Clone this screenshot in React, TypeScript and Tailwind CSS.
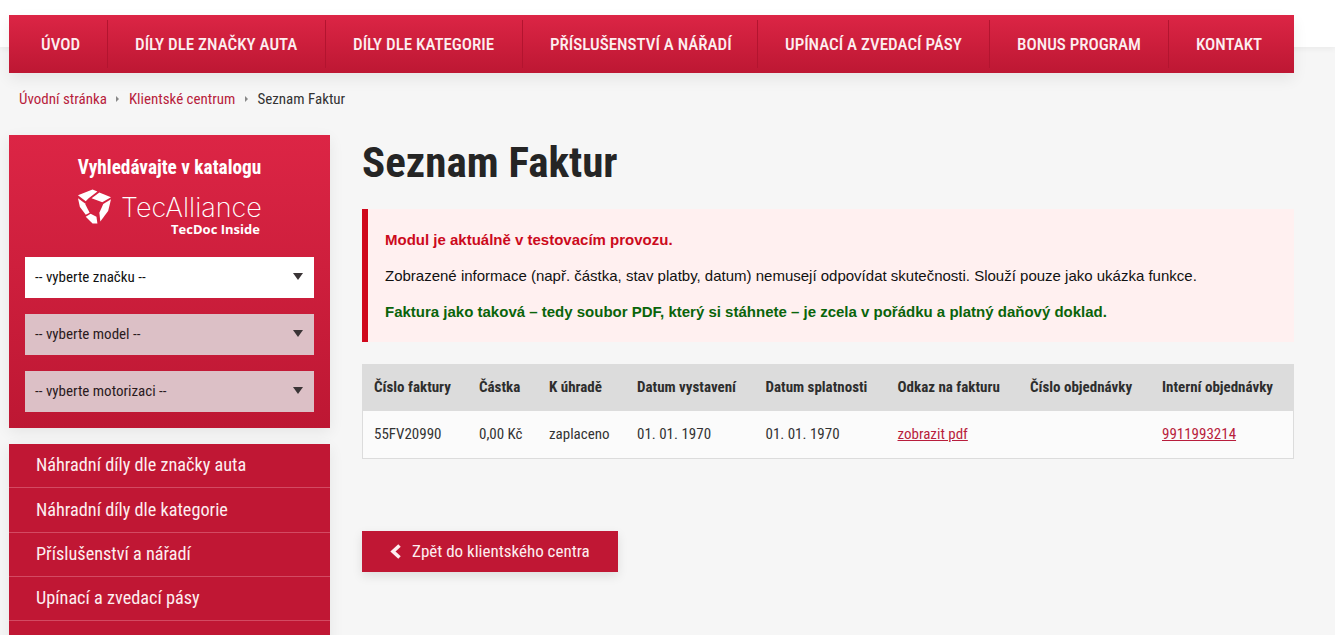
const NAV_ITEMS = [
  { label: 'Úvod', cls: 'w-[98px] pl-8' },
  { label: 'Díly dle značky auta', cls: 'w-[218px] pl-[27px]' },
  { label: 'Díly dle kategorie', cls: 'w-[197px] pl-[27px]' },
  { label: 'Příslušenství a nářadí', cls: 'w-[235px] pl-[27px]' },
  { label: 'Upínací a zvedací pásy', cls: 'w-[232px] pl-[27px]' },
  { label: 'Bonus program', cls: 'w-[179px] pl-[27px]' },
  { label: 'Kontakt', cls: 'w-[126px] pl-[27px]' },
];

const SIDE_ITEMS = [
  'Náhradní díly dle značky auta',
  'Náhradní díly dle kategorie',
  'Příslušenství a nářadí',
  'Upínací a zvedací pásy',
  'Ruční nářadí',
];

const HEADERS = [
  'Číslo faktury',
  'Částka',
  'K úhradě',
  'Datum vystavení',
  'Datum splatnosti',
  'Odkaz na fakturu',
  'Číslo objednávky',
  'Interní objednávky',
];

const condensed = "font-['Roboto_Condensed','Roboto',sans-serif] [font-stretch:75%]";

function Select({ label, disabled }: { label: string; disabled?: boolean }) {
  return (
    <div
      className={`flex h-[41px] items-center justify-between pl-2.5 pr-[11px] text-[15px] ${
        disabled ? 'bg-[#dcc0c6] text-[#2a1a1d]' : 'bg-white text-[#111]'
      }`}
    >
      <span>{label}</span>
      <span className="mb-0.5 h-0 w-0 border-x-[5px] border-t-[7px] border-x-transparent border-t-[#3a3436]" />
    </div>
  );
}

function TecAllianceLogo() {
  return (
    <div className="mt-[9px] flex justify-center">
      <div className="flex items-start gap-[9px]">
        <svg viewBox="0 0 36 37" className="h-[37px] w-[35px] shrink-0" fill="#fff">
          <path d="M1 6 L16 0 L21 2 L12 9 L9 12 Z" />
          <path d="M23 3 L35 8 L26 13 L15 9 Z" />
          <path d="M35 10 L32 22 L24 33 L23 24 L27 15 Z" />
          <path d="M1 9 L8 14 L13 24 L9 26 L3 18 Z" />
          <path d="M9 28 L14 25 L20 28 L21 35 L16 35 Z" />
        </svg>
        <div className="flex flex-col items-end pt-[5px] [font-stretch:100%]">
          <span className="font-['Inter',sans-serif] text-[27px] font-extralight leading-[28px] text-white">
            TecAlliance
          </span>
          <span className="pr-0.5 font-['Open_Sans',sans-serif] text-[13px] font-bold leading-[14px] text-white">
            TecDoc Inside
          </span>
        </div>
      </div>
    </div>
  );
}

export default function App() {
  return (
    <div className={`relative h-[635px] overflow-hidden bg-[#f6f6f6] ${condensed}`}>
      {/* White header strip behind the nav */}
      <div className="absolute inset-x-0 top-0 h-[47px] bg-white shadow-[0_2px_6px_rgba(0,0,0,0.05)]" />

      <div className="relative w-[1294px] pl-[9px] pt-[15px]">
        {/* Main nav */}
        <nav className="flex h-[58px] items-center bg-gradient-to-b from-[#dc2545] to-[#bd1733] shadow-[0_6px_14px_rgba(0,0,0,0.07)]">
          {NAV_ITEMS.map((item, i) => (
            <a
              key={item.label}
              className={`flex h-[48px] items-center whitespace-nowrap pt-0.5 text-[17px] font-medium uppercase text-[#fdeef0] ${item.cls} ${
                i > 0 ? 'border-l border-[#b3142f]' : ''
              }`}
            >
              {item.label}
            </a>
          ))}
        </nav>

        {/* Breadcrumb */}
        <div className="flex h-[52px] items-center pl-2.5 text-[15px] text-[#333]">
          <a className="text-[#b81d3c]">Úvodní stránka</a>
          <span className="mx-[9.5px] h-0 w-0 border-y-[3px] border-l-[3px] border-y-transparent border-l-[#888]" />
          <a className="text-[#b81d3c]">Klientské centrum</a>
          <span className="mx-[9.5px] h-0 w-0 border-y-[3px] border-l-[3px] border-y-transparent border-l-[#888]" />
          <span>Seznam Faktur</span>
        </div>

        <div className="mt-2.5 flex gap-8">
          {/* Sidebar */}
          <aside className="w-[321px] shrink-0">
            <div className="h-[293px] bg-gradient-to-b from-[#dc2545] to-[#bd1733] px-4 pt-[21px] shadow-[0_4px_14px_rgba(0,0,0,0.07)]">
              <h3 className="text-center text-[19.3px] font-bold leading-6 text-white">Vyhledávajte v katalogu</h3>
              <TecAllianceLogo />
              <div className="mt-[21px] flex flex-col gap-4">
                <Select label="-- vyberte značku --" />
                <Select label="-- vyberte model --" disabled />
                <Select label="-- vyberte motorizaci --" disabled />
              </div>
            </div>

            <ul className="mt-4 bg-[#c01734] shadow-[0_4px_14px_rgba(0,0,0,0.07)]">
              {SIDE_ITEMS.map((label) => (
                <li
                  key={label}
                  className="flex h-[44.33px] items-center border-b border-[#d34a62] pb-px pl-[27px] text-[18.25px] text-[#fdeef0]"
                >
                  {label}
                </li>
              ))}
            </ul>
          </aside>

          {/* Content */}
          <main className="w-[932px]">
            <h1 className="text-[43px] font-bold leading-[54px] text-[#252525]">Seznam Faktur</h1>

            <div className="mt-5 border-l-[6px] border-[#d0081c] bg-[#fff0f0] pb-5 pl-[17px] pt-[21px] font-['Liberation_Sans',sans-serif] text-[15px] leading-[20px] [font-stretch:100%]">
              <p className="font-bold text-[#cc0a1c]">Modul je aktuálně v testovacím provozu.</p>
              <p className="mt-4 text-[#111]">
                Zobrazené informace (např. částka, stav platby, datum) nemusejí odpovídat skutečnosti. Slouží pouze jako
                ukázka funkce.
              </p>
              <p className="mt-4 font-bold text-[#0a640a]">
                Faktura jako taková – tedy soubor PDF, který si stáhnete – je zcela v pořádku a platný daňový doklad.
              </p>
            </div>

            {/* Invoices */}
            <div className="mt-[22px] border-x border-b border-[#dcdcdc] bg-[#fbfbfb] text-[15px]">
              <div className="-mx-px grid h-[47px] grid-cols-[117px_70px_88px_128.5px_132px_132.5px_132px_132px] items-center bg-[#dcdcdc] font-bold text-[#2e2e2e]">
                {HEADERS.map((h, i) => (
                  <div key={h} className={`whitespace-nowrap ${i === 0 ? 'pl-3' : ''}`}>
                    {h}
                  </div>
                ))}
              </div>
              <div className="-mx-px grid h-[47px] grid-cols-[117px_70px_88px_128.5px_132px_132.5px_132px_132px] items-center text-[#333]">
                <div className="pl-3">55FV20990</div>
                <div>0,00 Kč</div>
                <div>zaplaceno</div>
                <div>01. 01. 1970</div>
                <div>01. 01. 1970</div>
                <a className="text-[#b81d3c] underline">zobrazit pdf</a>
                <div />
                <a className="text-[#b81d3c] underline">9911993214</a>
              </div>
            </div>

            <a className="mt-[72px] flex h-[41px] w-[256px] items-center bg-[#c01734] pl-7 text-[17px] text-[#fdeef0] shadow-[0_4px_10px_rgba(0,0,0,0.1)]">
              <svg viewBox="0 0 12 15" className="mr-2.5 h-[15px] w-[12px]" fill="none" stroke="currentColor" strokeWidth={3.6}>
                <polyline points="9.5,1.5 3,7.5 9.5,13.5" />
              </svg>
              Zpět do klientského centra
            </a>
          </main>
        </div>
      </div>
    </div>
  );
}
